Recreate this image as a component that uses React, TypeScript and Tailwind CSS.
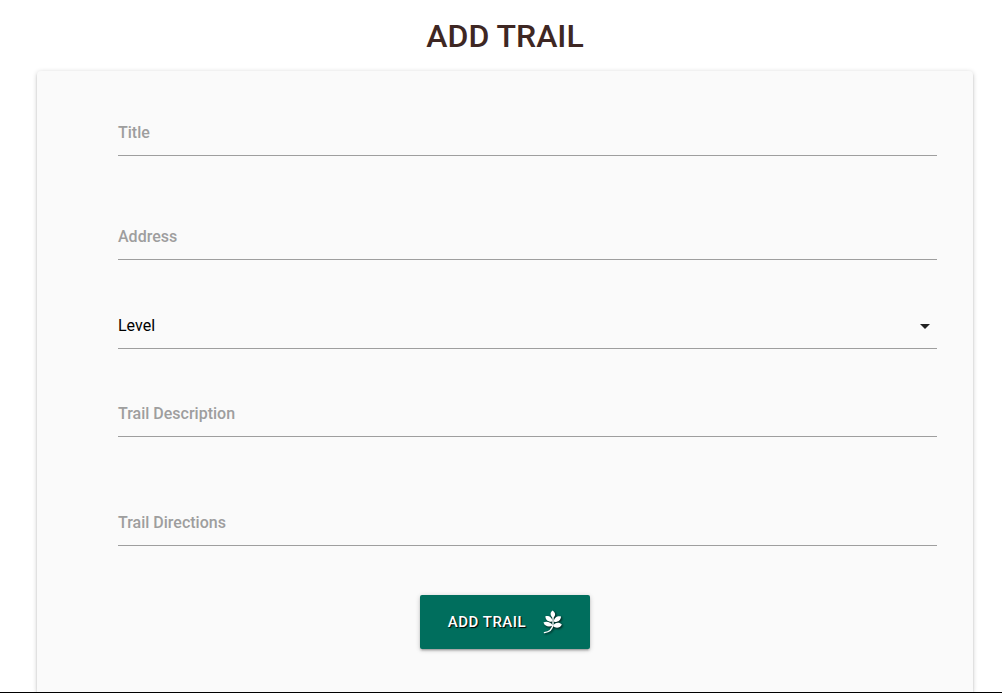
import React, { useState } from "react";

const labelClass =
  "pointer-events-none col-start-1 row-start-1 pt-[11px] text-base leading-6 font-medium text-[#9e9e9e]";
const controlClass =
  "col-start-1 row-start-1 h-[46px] w-full resize-none appearance-none rounded-none border-b border-[#9e9e9e] bg-transparent text-base text-black outline-none focus:border-[#00695c]";

function Field({ id, label, multiline = false }: { id: string; label: string; multiline?: boolean }) {
  const [value, setValue] = useState("");
  return (
    <div className="grid">
      {multiline ? (
        <textarea id={id} rows={1} value={value} onChange={(e) => setValue(e.target.value)} className={`${controlClass} overflow-hidden py-2.5`} />
      ) : (
        <input id={id} type="text" value={value} onChange={(e) => setValue(e.target.value)} className={controlClass} />
      )}
      <label htmlFor={id} className={value ? `${labelClass} invisible` : labelClass}>
        {label}
      </label>
    </div>
  );
}

function LeafIcon() {
  return (
    <svg viewBox="-1 0 20 24" className="h-6 w-5 overflow-visible drop-shadow-[1px_1px_1px_rgba(0,0,0,0.8)]" fill="white" aria-hidden="true">
      <path d="M9.4 .5C6.8 2.8 7 6 10 8C13.2 5.6 12.6 2.4 9.4 .5Z" />
      <path d="M2.4 6.2C6 5.4 9.2 7.4 9.5 11.6C5.4 12.2 2.4 10 2.4 6.2Z" />
      <path d="M18 6.4C14.2 5.6 11 7.6 10.7 11.8C14.8 12.4 17.9 10.2 18 6.4Z" />
      <path d="M.4 12.4C3.4 10.9 7.8 11.8 9.7 15.4C6.4 17.6 2 16.6 .4 12.4Z" />
      <path d="M18.8 14.4C16 11.8 12 12.4 9.9 16C13 18.8 17.2 18 18.8 14.4Z" />
      <path d="M10 6V14.6C9.4 18.8 6 22 1.4 22.6" fill="none" stroke="white" strokeWidth="1.3" strokeLinecap="round" />
    </svg>
  );
}

export default function App() {
  return (
    <div className="flex min-h-screen flex-col bg-white font-['Roboto',sans-serif]">
      <main className="flex flex-1 flex-col pr-[29px] pl-[37px]">
        <h1 className="pt-4 pb-[15px] text-center text-[32px] leading-10 font-medium text-[#3e2723]">
          ADD TRAIL
        </h1>
        <form
          onSubmit={(e) => e.preventDefault()}
          className="flex flex-1 flex-col rounded-t-sm bg-[#fafafa] pt-[39px] pb-[43px] shadow-[0_2px_2px_0_rgba(0,0,0,0.14),0_3px_1px_-2px_rgba(0,0,0,0.12),0_1px_5px_0_rgba(0,0,0,0.2)]"
        >
          <div className="flex flex-col pr-9 pl-[81px]">
            <Field id="title" label="Title" />
            <div className="mt-[58px]">
              <Field id="address" label="Address" />
            </div>
            <div className="mt-[43px] grid items-center">
              <select aria-label="Level" defaultValue="" className={controlClass}>
                <option value="">Level</option>
                <option>Easy</option>
                <option>Moderate</option>
                <option>Hard</option>
              </select>
              <svg viewBox="0 0 10 5" className="pointer-events-none col-start-1 row-start-1 mr-[7px] h-[5px] w-[10px] justify-self-end" fill="#212121" aria-hidden="true">
                <path d="M0 0H10L5 5Z" />
              </svg>
            </div>
            <div className="mt-[42px]">
              <Field id="description" label="Trail Description" multiline />
            </div>
            <div className="mt-[63px]">
              <Field id="directions" label="Trail Directions" multiline />
            </div>
          </div>
          <button
            type="submit"
            className="mt-[49px] flex h-[54px] items-center gap-4 self-center rounded-xs bg-[#006e5d] px-7 text-[15px] font-medium tracking-[0.5px] text-white shadow-[0_2px_2px_0_rgba(0,0,0,0.14),0_3px_1px_-2px_rgba(0,0,0,0.12),0_1px_5px_0_rgba(0,0,0,0.2)] [text-shadow:1px_1px_1px_#000]"
          >
            ADD TRAIL
            <LeafIcon />
          </button>
        </form>
      </main>
      <footer className="relative h-px bg-black shadow-[0_0_30px_0_rgba(0,0,0,0.12)]" />
    </div>
  );
}
